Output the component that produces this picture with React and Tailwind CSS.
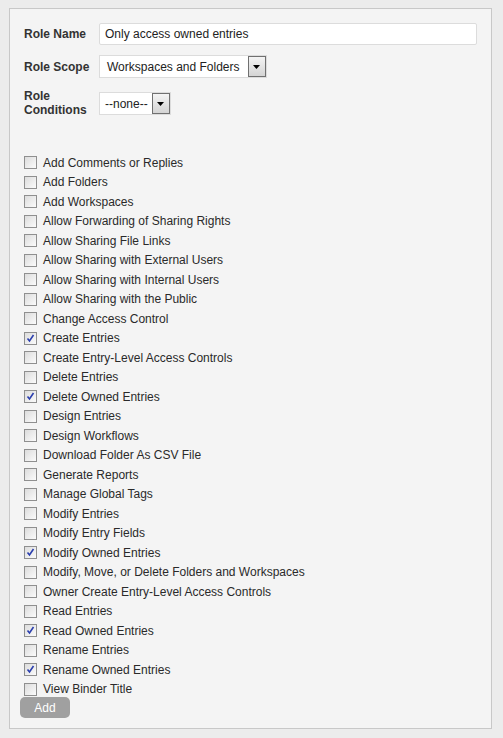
import React from "react";

const perms = [
  ["Add Comments or Replies", false],
  ["Add Folders", false],
  ["Add Workspaces", false],
  ["Allow Forwarding of Sharing Rights", false],
  ["Allow Sharing File Links", false],
  ["Allow Sharing with External Users", false],
  ["Allow Sharing with Internal Users", false],
  ["Allow Sharing with the Public", false],
  ["Change Access Control", false],
  ["Create Entries", true],
  ["Create Entry-Level Access Controls", false],
  ["Delete Entries", false],
  ["Delete Owned Entries", true],
  ["Design Entries", false],
  ["Design Workflows", false],
  ["Download Folder As CSV File", false],
  ["Generate Reports", false],
  ["Manage Global Tags", false],
  ["Modify Entries", false],
  ["Modify Entry Fields", false],
  ["Modify Owned Entries", true],
  ["Modify, Move, or Delete Folders and Workspaces", false],
  ["Owner Create Entry-Level Access Controls", false],
  ["Read Entries", false],
  ["Read Owned Entries", true],
  ["Rename Entries", false],
  ["Rename Owned Entries", true],
  ["View Binder Title", false],
];

const Arrow = () => (
  <div className="w-[18px] h-full border border-[#707070] bg-gradient-to-b from-[#f4f4f4] to-[#d4d4d4] flex items-center justify-center">
    <svg width="7" height="4" viewBox="0 0 7 4">
      <path d="M0 0h7L3.5 4z" fill="#000" />
    </svg>
  </div>
);

const Check = ({ checked }) => (
  <span className="w-[13px] h-[13px] border border-[#8f8f8f] bg-gradient-to-br from-[#dcdcdc] to-[#fbfbfb] flex items-center justify-center shrink-0">
    {checked && (
      <svg width="9" height="9" viewBox="0 0 9 9">
        <path d="M1.5 4.5 L3.5 7 L7.5 1" stroke="#2b3fae" strokeWidth="1.6" fill="none" />
      </svg>
    )}
  </span>
);

export default function App() {
  return (
    <div
      className="w-[503px] h-[738px] bg-[#ececec] pt-[8px] pl-[9px]"
      style={{ fontFamily: '"Liberation Sans", Arial, sans-serif' }}
    >
      <div className="w-[483px] h-[721px] bg-[#f4f4f4] border border-[#c8c8c8] pl-[14px] pt-[14px] text-[12px] text-[#333]">
        {/* header form */}
        <div className="flex items-center h-[22px]">
          <div className="w-[75px] font-bold">Role Name</div>
          <div className="w-[378px] h-[22px] bg-white border border-[#dcdcdc] rounded-[2px] px-[5px] flex items-center text-[#222]">
            Only access owned entries
          </div>
        </div>
        <div className="flex items-center h-[23px] mt-[10px]">
          <div className="w-[75px] font-bold">Role Scope</div>
          <div className="h-[23px] bg-white border border-[#dcdcdc] flex items-center">
            <span className="pl-[7px] pr-[8px] text-[#222]">Workspaces and Folders</span>
            <Arrow />
          </div>
        </div>
        <div className="flex items-center h-[23px] mt-[14px]">
          <div className="w-[75px] font-bold leading-[14px] -mt-[1px]">
            Role
            <br />
            Conditions
          </div>
          <div className="h-[23px] bg-white border border-[#dcdcdc] flex items-center">
            <span className="pl-[5px] pr-[4px] text-[#222]">--none--</span>
            <Arrow />
          </div>
        </div>

        {/* permissions */}
        <div className="mt-[38px]">
          {perms.map(([label, checked]) => (
            <div key={label} className="flex items-center h-[19.5px]">
              <Check checked={checked} />
              <span className="ml-[6px] text-[#2a2a2a]">{label}</span>
            </div>
          ))}
        </div>
        <button className="-mt-[2px] -ml-[4px] w-[50px] h-[21px] rounded-[5px] bg-[#a0a0a0] text-white text-[12px] block">
          Add
        </button>
      </div>
    </div>
  );
}
